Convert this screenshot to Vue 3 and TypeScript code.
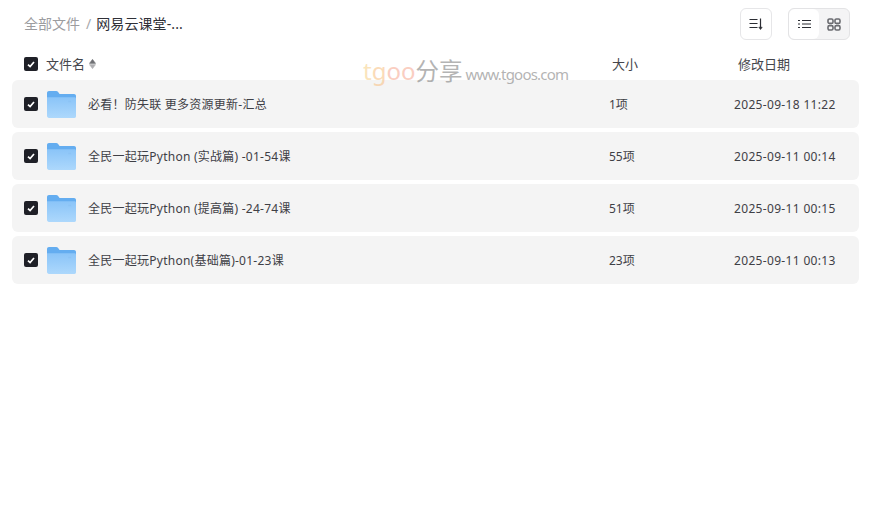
<script setup lang="ts">
interface Row { name: string; size: string; date: string }
const rows: Row[] = [
  { name: '必看！防失联 更多资源更新-汇总', size: '1项', date: '2025-09-18 11:22' },
  { name: '全民一起玩Python (实战篇) -01-54课', size: '55项', date: '2025-09-11 00:14' },
  { name: '全民一起玩Python (提高篇) -24-74课', size: '51项', date: '2025-09-11 00:15' },
  { name: '全民一起玩Python(基础篇)-01-23课', size: '23项', date: '2025-09-11 00:13' },
]
</script>

<template>
  <div class="page">
    <header class="top">
      <nav class="crumbs">
        <span class="crumb-root">全部文件</span>
        <span class="crumb-sep">/</span>
        <span class="crumb-cur">网易云课堂-...</span>
      </nav>
      <div class="tools">
        <button class="tool-btn" type="button" aria-label="排序">
          <svg width="14" height="14" viewBox="0 0 14 14" fill="none" stroke="#2b2d33" stroke-width="1.2">
            <path d="M0.5 2.5H8.5M0.5 6.5H8.5M0.5 10.5H8.5" />
            <path d="M11.5 1.5V11" />
            <path d="M9.8 10.2L11.5 12.6L13.2 10.2Z" fill="#2b2d33" stroke-width="0.6" />
          </svg>
        </button>
        <div class="switch">
          <span class="sw active">
            <svg width="13" height="10" viewBox="0 0 13 10" fill="none" stroke="#2b2d33" stroke-width="1.2">
              <path d="M0 1.5H2M4 1.5H13M0 5H2M4 5H13M0 8.5H2M4 8.5H13" />
            </svg>
          </span>
          <span class="sw">
            <svg width="14" height="13" viewBox="0 0 14 13" fill="none" stroke="#6a6b70" stroke-width="1.6">
              <rect x="1" y="1" width="5" height="4.4" rx="1.4" />
              <rect x="8" y="1" width="5" height="4.4" rx="1.4" />
              <rect x="1" y="7.6" width="5" height="4.4" rx="1.4" />
              <rect x="8" y="7.6" width="5" height="4.4" rx="1.4" />
            </svg>
          </span>
        </div>
      </div>
    </header>

    <div class="thead">
      <span class="check">
        <svg width="8" height="7" viewBox="0 0 8 7" fill="none" stroke="#fff" stroke-width="1.7"><path d="M1 3.6L3.1 5.6L7 1" /></svg>
      </span>
      <span class="th-name">文件名
        <svg class="sort" width="7" height="10" viewBox="0 0 7 10">
          <path d="M3.5 0.3L6.6 4.4H0.4Z" fill="#6f7074" stroke="#6f7074" stroke-width="0.5" />
          <path d="M3.5 9.7L6.6 5.6H0.4Z" fill="#b0b0b3" stroke="#b0b0b3" stroke-width="0.5" />
        </svg>
      </span>
      <span class="th-size">大小</span>
      <span class="th-date">修改日期</span>
    </div>

    <ul class="list">
      <li v-for="r in rows" :key="r.name" class="row">
        <span class="check">
          <svg width="8" height="7" viewBox="0 0 8 7" fill="none" stroke="#fff" stroke-width="1.7"><path d="M1 3.6L3.1 5.6L7 1" /></svg>
        </span>
        <svg class="folder" width="29" height="27" viewBox="0 0 30 28" preserveAspectRatio="none">
          <defs>
            <linearGradient id="fg" x1="0" y1="0" x2="0" y2="1">
              <stop offset="0" stop-color="#8ac4f8" />
              <stop offset="1" stop-color="#add8fc" />
            </linearGradient>
          </defs>
          <path d="M0 2C0 .9.9 0 2 0H9.5C10.4 0 11 .4 11.5 1L13 3H28C29.1 3 30 3.9 30 5V10H0Z" fill="#64adf0" />
          <path d="M0 6.5H28.5C29.3 6.5 30 7.2 30 8V26.5C30 27.3 29.3 28 28.5 28H2C.9 28 0 27.1 0 26Z" fill="url(#fg)" />
          <rect x="22" y="10" width="3" height="1.6" fill="#8cc3f5" />
        </svg>
        <span class="name">{{ r.name }}</span>
        <span class="size">{{ r.size }}</span>
        <span class="date">{{ r.date }}</span>
      </li>
    </ul>

    <div class="watermark">
      <span class="wm-t">t</span><span class="wm-g">g</span><span class="wm-o">oo</span><span class="wm-cn">分享</span>
      <span class="wm-url">www.tgoos.com</span>
    </div>
  </div>
</template>

<style>
html, body { margin: 0; background: #fff; }
</style>

<style scoped>
.page {
  position: relative;
  width: 874px;
  height: 514px;
  padding: 8px 15px 0 12px;
  box-sizing: border-box;
  font-family: "Noto Sans", "Noto Sans CJK SC", sans-serif;
  color: #34363c;
  overflow: hidden;
}
.top {
  display: flex;
  align-items: center;
  justify-content: space-between;
  height: 32px;
  padding: 0 9px 0 12px;
}
.crumbs { display: flex; align-items: center; font-size: 14px; line-height: 18px; }
.crumb-root { color: #9c9c9f; }
.crumb-sep { color: #a8a8ab; margin: 0 5px 0 6px; font-size: 14px; }
.crumb-cur { color: #2f3037; letter-spacing: 0.1px; }
.tools { display: flex; gap: 16px; }
.tool-btn {
  width: 32px;
  height: 32px;
  padding: 0;
  border: 1px solid #e6e6e8;
  border-radius: 6px;
  background: #fff;
  display: flex;
  align-items: center;
  justify-content: center;
}
.switch {
  display: flex;
  width: 62px;
  height: 32px;
  box-sizing: border-box;
  border: 1px solid #e3e3e5;
  border-radius: 6px;
  background: #f4f4f5;
  overflow: hidden;
}
.sw { flex: 1; display: flex; align-items: center; justify-content: center; }
.sw.active { background: #fff; border-radius: 6px; }
.thead {
  display: flex;
  align-items: center;
  height: 40px;
  box-sizing: border-box;
  padding: 8px 0 0 12px;
  font-size: 13px;
  color: #45464c;
}
.thead > span:not(.check) { margin-top: -2px; }
.check {
  flex: none;
  width: 14px;
  height: 14px;
  border-radius: 2px;
  background: #1f2027;
  display: flex;
  align-items: center;
  justify-content: center;
}
.th-name { margin-left: 8px; width: 566px; display: flex; align-items: center; gap: 4px; }
.th-size { width: 126px; }
.sort { display: block; margin-top: 1px; }
.list { list-style: none; margin: 0; padding: 0; display: flex; flex-direction: column; gap: 4px; }
.row {
  display: flex;
  align-items: center;
  height: 48px;
  padding-left: 12px;
  background: #f4f4f4;
  border-radius: 6px;
  font-size: 12px;
  line-height: 16px;
  color: #3f4046;
}
.name, .size, .date { margin-top: 2px; }
.folder { flex: none; margin-left: 9px; }
.name { margin-left: 12px; width: 521px; white-space: nowrap; letter-spacing: 0.25px; }
.size { width: 125px; }
.date { white-space: nowrap; letter-spacing: 0.33px; }
.watermark {
  position: absolute;
  left: 363px;
  top: 53px;
  display: flex;
  align-items: baseline;
  font-family: "Noto Sans", sans-serif;
  font-size: 24px;
  line-height: 34px;
  white-space: nowrap;
  opacity: 0.55;
}
.wm-t { color: #f7cf86; }
.wm-g { color: #f9bf80; }
.wm-o { color: #f7a78f; }
.wm-cn { color: #777; font-family: "Noto Sans CJK SC", sans-serif; font-size: 23.5px; }
.wm-url { color: #777; font-size: 15px; margin-left: 3px; letter-spacing: -0.8px; }
</style>
